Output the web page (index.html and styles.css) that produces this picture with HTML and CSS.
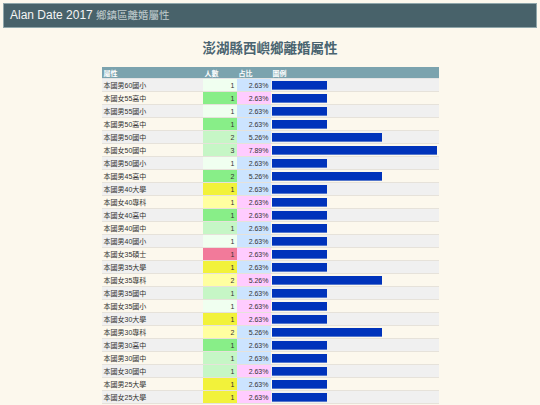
FILE: index.html
```html
<!DOCTYPE html>
<html lang="zh-Hant">
  <head>
    <meta charset="UTF-8" />
    <meta name="viewport" content="width=device-width, initial-scale=1.0" />
    <title>Alan Date 2017 鄉鎮區離婚屬性</title>
    <link rel="stylesheet" href="styles.css">
  </head>
  <body>
    <div class="topbar">Alan Date 2017 <span class="sub">鄉鎮區離婚屬性</span></div>
    <h1>澎湖縣西嶼鄉離婚屬性</h1>
    <table class="stats">
      <thead>
        <tr><th class="c-name">屬性</th><th class="c-num">人數</th><th class="c-pct">占比</th><th class="c-bar">圖例</th></tr>
      </thead>
      <tbody id="rows"></tbody>
    </table>

    <script>
      const data = [
        ["本國男60國小", 1], ["本國女55高中", 1], ["本國男55國小", 1], ["本國男50高中", 1],
        ["本國男50國中", 2], ["本國女50國中", 3], ["本國男50國小", 1], ["本國男45高中", 2],
        ["本國男40大學", 1], ["本國女40專科", 1], ["本國女40高中", 1], ["本國男40國中", 1],
        ["本國男40國小", 1], ["本國女35碩士", 1], ["本國男35大學", 1], ["本國女35專科", 2],
        ["本國男35國中", 1], ["本國女35國小", 1], ["本國女30大學", 1], ["本國男30專科", 2],
        ["本國男30高中", 1], ["本國男30國中", 1], ["本國女30國中", 1], ["本國男25大學", 1],
        ["本國女25大學", 1]
      ];
      const total = 38;
      const edu = { "國小": "e1", "國中": "e2", "高中": "e3", "專科": "e4", "大學": "e5", "碩士": "e6" };
      const tbody = document.getElementById("rows");

      data.forEach(([name, n]) => {
        const sex = name.charAt(2) === "男" ? "male" : "female";
        const pct = ((n / total) * 100).toFixed(2) + "%";
        const tr = document.createElement("tr");
        tr.innerHTML =
          `<td class="c-name">${name}</td>` +
          `<td class="c-num ${edu[name.slice(-2)]}">${n}</td>` +
          `<td class="c-pct ${sex}">${pct}</td>` +
          `<td class="c-bar"><div class="bar" style="width:${n * 55}px"></div></td>`;
        tbody.appendChild(tr);
      });
    </script>
  </body>
</html>
```

FILE: styles.css
```css
body {
  margin: 3px;
  background-color: #fcf8ed;
  font-family: "Liberation Sans", "Noto Sans CJK TC", sans-serif;
  color: #333;
}
.topbar {
  height: 23px;
  line-height: 23px;
  padding: 0 6px;
  background-color: #48626a;
  border: 1px solid #8fa6aa;
  color: #f4f4f4;
  font-size: 12px;
}
.topbar .sub {
  color: #c0ccce;
  font-size: 10.5px;
}
h1 {
  margin: 9px 0 0;
  height: 24px;
  text-align: center;
  font-size: 13.5px;
  color: #4a6470;
}
.stats {
  margin: 6px auto 0;
  width: 337px;
  border-collapse: collapse;
  font-size: 7px;
  table-layout: fixed;
}
.stats th {
  height: 11px;
  padding: 0 2px;
  background-color: #7ba3ae;
  color: #fff;
  text-align: left;
  font-weight: bold;
  border-bottom: 1px solid #e4e4e4;
}
.stats td {
  height: 12px;
  padding: 0 2px;
  border-bottom: 1px solid #e6e2da;
}
.stats tbody tr:nth-child(odd) {
  background-color: #f0f0f0;
}
.c-name { width: 97px; }
.c-num { width: 30px; }
.c-pct { width: 30px; }
td.c-num, td.c-pct { text-align: right; }
td.c-bar { padding: 0 1px; }
.e1 { background-color: #f0fff0; }
.e2 { background-color: #c6f6c6; }
.e3 { background-color: #88ee88; }
.e4 { background-color: #ffffa0; }
.e5 { background-color: #f2f23a; }
.e6 { background-color: #f27a9a; }
.male { background-color: #cce4ff; }
.female { background-color: #ffccff; }
.bar {
  height: 9px;
  background-color: #0033bb;
  border-bottom: 1px solid #5577cc;
  box-sizing: border-box;
}
```
